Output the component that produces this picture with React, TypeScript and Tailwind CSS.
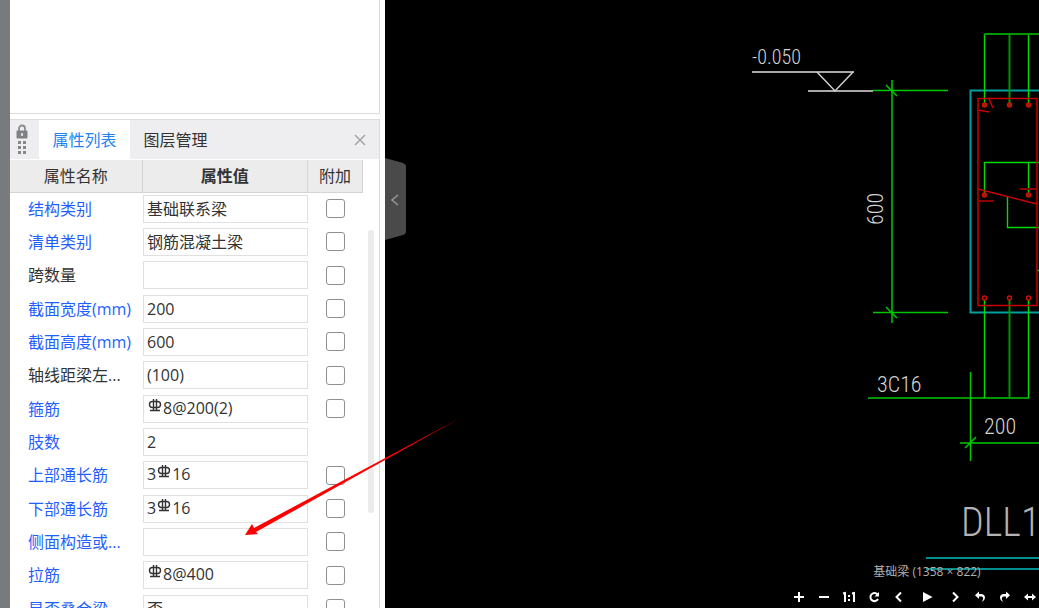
import React from "react";
import clsx from "clsx";

type Property = {
  name: string;
  value: string;
  linked?: boolean;
  // amount in front of the rebar symbol, "" when the symbol comes first
  rebar?: string;
  extra?: boolean;
};

const properties: Property[] = [
  { name: "结构类别", value: "基础联系梁", linked: true, extra: true },
  { name: "清单类别", value: "钢筋混凝土梁", linked: true, extra: true },
  { name: "跨数量", value: "", extra: true },
  { name: "截面宽度(mm)", value: "200", linked: true, extra: true },
  { name: "截面高度(mm)", value: "600", linked: true, extra: true },
  { name: "轴线距梁左...", value: "(100)", extra: true },
  { name: "箍筋", value: "8@200(2)", linked: true, rebar: "", extra: true },
  { name: "肢数", value: "2", linked: true },
  { name: "上部通长筋", value: "16", linked: true, rebar: "3", extra: true },
  { name: "下部通长筋", value: "16", linked: true, rebar: "3", extra: true },
  { name: "侧面构造或...", value: "", linked: true, extra: true },
  { name: "拉筋", value: "8@400", linked: true, rebar: "", extra: true },
  { name: "是否叠合梁", value: "否", linked: true, extra: true },
];

const RebarIcon = () => (
  <svg
    width="16"
    height="14"
    viewBox="-1 0 16 14"
    fill="none"
    stroke="#333"
    strokeWidth="1.4"
    className="mb-1 shrink-0"
  >
    <rect x="1.5" y="2.5" width="11" height="6" rx="3" />
    <path d="M5.5 0V11M8.5 0V11M2 11.5H12" />
  </svg>
);

const LockIcon = () => (
  <svg width="12" height="32" viewBox="0 0 12 32" aria-hidden="true">
    <path d="M3 7V4.5a3 3 0 0 1 6 0V7" fill="none" stroke="#8b8c8e" strokeWidth="1.8" />
    <rect x="0.5" y="6.5" width="11" height="8" rx="1" fill="#808285" />
    <rect x="5" y="9" width="2" height="3" fill="#d8d8da" />
    <g fill="#85878a">
      <rect x="2" y="17" width="3" height="3" />
      <rect x="7" y="17" width="3" height="3" />
      <rect x="2" y="22" width="3" height="3" />
      <rect x="7" y="22" width="3" height="3" />
      <rect x="2" y="27" width="3" height="3" />
      <rect x="7" y="27" width="3" height="3" />
    </g>
  </svg>
);

const PropertyRow = ({ name, value, linked, rebar, extra }: Property) => (
  <tr className="h-[33px] nth-[3n]:h-[34px]">
    <th
      scope="row"
      className={clsx(
        "whitespace-nowrap p-0 pl-[18px] text-left font-normal",
        linked ? "text-[#1f5fff]" : "text-[#333]"
      )}
    >
      {name}
    </th>
    <td className="p-0">
      <div
        className={clsx(
          "ml-px flex h-7 items-center border border-[#e0e0e0] pl-[3px]",
          rebar !== undefined && "pb-0.5"
        )}
      >
        {rebar !== undefined && (
          <>
            {rebar}
            <RebarIcon />
          </>
        )}
        <input
          type="text"
          aria-label={name}
          defaultValue={value}
          className="w-full min-w-0 bg-transparent outline-none"
        />
      </div>
    </td>
    <td className="p-0">
      {extra && (
        <input
          type="checkbox"
          aria-label={`${name} 附加`}
          className="mx-auto block size-[19px] appearance-none rounded-[3px] border border-[#8f8f8f] bg-white checked:bg-[#1f5fff]"
        />
      )}
    </td>
  </tr>
);

const PropertyPanel = () => (
  <section className="flex min-h-0 flex-1 flex-col border-r border-t border-[#dcdcde]">
    <div className="flex h-[39px] shrink-0 items-stretch bg-[#eeeef0]">
      <span className="flex w-[29px] items-center pl-1.5">
        <LockIcon />
      </span>
      <button className="w-[91px] bg-white text-[#1f82f0]">属性列表</button>
      <button className="w-[91px]">图层管理</button>
      <button aria-label="关闭" className="ml-auto px-[13px]">
        <svg width="12" height="12" viewBox="0 0 12 12" stroke="#a5a5a7" strokeWidth="1.5">
          <path d="M1 1L11 11M11 1L1 11" />
        </svg>
      </button>
    </div>

    <div className="mt-px flex min-h-0 flex-1 overflow-hidden">
      <table className="w-full flex-1 table-fixed border-collapse self-start">
        <colgroup>
          <col className="w-[132px]" />
          <col />
          <col className="w-[55px]" />
        </colgroup>
        <thead>
          <tr className="h-8 bg-[#ececec]">
            <th className="border-b border-r border-[#d4d4d4] p-0 font-normal">属性名称</th>
            <th className="border-b border-r border-[#d4d4d4] p-0 font-bold">属性值</th>
            <th className="border-b border-r border-[#d4d4d4] p-0 font-normal">附加</th>
          </tr>
        </thead>
        <tbody>
          {properties.map((property) => (
            <PropertyRow key={property.name} {...property} />
          ))}
        </tbody>
      </table>
      <div className="w-4 shrink-0 pl-[5px] pt-[70px]">
        <div className="h-[283px] w-[6px] rounded-full bg-[#ebebeb]" />
      </div>
    </div>
  </section>
);

const Drawing = () => (
  <svg
    viewBox="385 0 654 608"
    preserveAspectRatio="xMinYMin meet"
    className="block h-full w-full"
    fill="none"
  >
    {/* level mark */}
    <path d="M752 72H854M808 91H873" stroke="#a8a8a8" strokeWidth="2" />
    <path d="M817 72L835 91L853 72" stroke="#d0d0d0" strokeWidth="1.5" />

    {/* beam outline */}
    <path d="M1039 90.5H970.5V312.5H1039" stroke="#00a0a0" strokeWidth="2" />

    {/* leaders and dimension lines */}
    <g stroke="#00c800" strokeWidth="1.5">
      <path d="M873 90.5H948M873 312.5H948M892 80V323" />
      <path d="M886 85L897 96M886 307L897 318" />
      <path d="M868 398H1029M970.5 372V461M960 443H1039M965 448L976 437" />
    </g>
    <g stroke="#00dc00" strokeWidth="1.4">
      <path d="M984.5 105V34M1028.5 34V105M1039 162.5H984.5V195M1028.5 162.5V195" />
      <path d="M1007.5 197V227.5H1039M984.5 300V398M1028.5 300V398M1037 270.5H1039" />
    </g>
    <path d="M984 34H1039M1009.5 34V105M1009.5 300V398" stroke="#009600" strokeWidth="2" />

    {/* stirrup */}
    <g stroke="#c80000" strokeWidth="1.5">
      <rect x="978" y="98.5" width="59" height="207" />
      <path d="M989 99L993 108M978 110L989 112M978 189L1037 204" />
      <path d="M1020 189H1037M978 201H994" stroke="#8c0000" strokeWidth="2" />
    </g>
    <g stroke="#d01000" strokeWidth="1.5">
      <circle cx="984.5" cy="105" r="2" fill="#803000" />
      <circle cx="1009.5" cy="105" r="2" fill="#803000" />
      <circle cx="1028.5" cy="105" r="2" fill="#803000" />
      <circle cx="984.5" cy="195" r="2" fill="#803000" />
      <circle cx="1028.5" cy="195" r="2" fill="#803000" />
      <circle cx="984.5" cy="298" r="2" />
      <circle cx="1009.5" cy="298" r="2" />
      <circle cx="1028.5" cy="298" r="2" />
    </g>

    <path d="M926 558H1039M926 569H1039" stroke="#008f8f" strokeWidth="2" />

    <g fill="#d4d4d4" className="font-['Roboto_Condensed','Roboto',sans-serif] font-light">
      <text x="752" y="64" fontSize="20">-0.050</text>
      <text transform="translate(883 225) rotate(-90)" fontSize="22">600</text>
      <text x="877" y="392" fontSize="22">3C16</text>
      <text x="984" y="434" fontSize="22">200</text>
      <text x="961" y="536" fontSize="40" fill="#b4b4b4">DLL1</text>
    </g>
  </svg>
);

const toolButtons = [
  { label: "放大", width: "w-6", icon: <path d="M8 3V13M3 8H13" /> },
  { label: "缩小", width: "w-6", icon: <path d="M3 8H13" /> },
  {
    label: "原始大小",
    width: "w-6",
    icon: <path d="M2 4.5L4 4V13M11 4.5L13 4V13M8 6V8M8 10V12" />,
  },
  {
    label: "重置",
    width: "w-6",
    icon: (
      <>
        <path d="M11.5 5.5A4 4 0 1 0 12 10" />
        <path d="M13 3V7.5H8.5Z" fill="white" stroke="none" />
      </>
    ),
  },
  { label: "上一张", width: "w-6", icon: <path d="M10 3.5L5.5 8L10 12.5" /> },
  { label: "播放", width: "w-[30px]", icon: <path d="M4 3V13L13.5 8Z" fill="white" stroke="none" /> },
  { label: "下一张", width: "w-6", icon: <path d="M6 3.5L10.5 8L6 12.5" /> },
  {
    label: "向左旋转",
    width: "w-6",
    icon: (
      <>
        <path d="M7 2.5V10L3 6.2Z" fill="white" stroke="none" />
        <path d="M6 5H9C14 5 14.5 11 9.5 13C12 10 11.5 7.5 9 7.5H6Z" fill="white" stroke="none" />
      </>
    ),
  },
  {
    label: "向右旋转",
    width: "w-6",
    icon: (
      <>
        <path d="M9 2.5V10L13 6.2Z" fill="white" stroke="none" />
        <path d="M10 5H7C2 5 1.5 11 6.5 13C4 10 4.5 7.5 7 7.5H10Z" fill="white" stroke="none" />
      </>
    ),
  },
  {
    label: "水平翻转",
    width: "w-6",
    icon: (
      <>
        <path d="M4 8H12" />
        <path d="M6 4.5V11.5L2 8ZM10 4.5V11.5L14 8Z" fill="white" stroke="none" />
      </>
    ),
  },
];

const Viewer = () => (
  <main className="relative min-w-0 flex-1 overflow-hidden bg-black">
    <Drawing />

    <button aria-label="收起" className="absolute left-0 top-[158px]">
      <svg width="22" height="82" viewBox="0 0 22 82" fill="none">
        <path d="M0 0L18 5Q21 6 21 9V73Q21 76 18 77L0 82Z" fill="#4a4a4a" />
        <path d="M13 37L7 42L13 47" stroke="#999" strokeWidth="1.5" />
      </svg>
    </button>

    <div className="absolute bottom-0 left-[402px] w-[280px]">
      <p className="pb-1.5 text-center text-xs text-[#b0b0b0]">基础梁 (1358 × 822)</p>
      <div className="flex gap-px">
        {toolButtons.map(({ label, width, icon }) => (
          <button
            key={label}
            aria-label={label}
            className={clsx("flex h-[22px] shrink-0 items-center justify-center", width)}
          >
            <svg width="16" height="16" viewBox="0 0 16 16" fill="none" stroke="white" strokeWidth="2">
              {icon}
            </svg>
          </button>
        ))}
      </div>
    </div>
  </main>
);

const App = () => {
  return (
    <div className="relative flex h-screen overflow-hidden bg-white font-['Open_Sans','Noto_Sans_CJK_SC',sans-serif] text-base/6 text-[#333]">
      <aside className="flex w-[385px] shrink-0 flex-col border-l-[10px] border-[#777b7e] pr-[5px]">
        <div className="mb-[5px] h-[114px] shrink-0 border-b border-r border-[#dcdcde]" />
        <PropertyPanel />
      </aside>
      <Viewer />

      {/* pointer to the side bars field */}
      <svg
        width="220"
        height="122"
        viewBox="244 416 220 122"
        className="pointer-events-none absolute left-[244px] top-[416px]"
      >
        <defs>
          <linearGradient id="tail" x1="0" x2="1" y1="0" y2="0">
            <stop offset="0.8" stopColor="#ff0000" />
            <stop offset="1" stopColor="#ff0000" stopOpacity="0.7" />
          </linearGradient>
        </defs>
        <path d="M245 535L252 524L254 528L463 416.5L256 532L258 534Z" fill="url(#tail)" />
      </svg>
    </div>
  );
};

export default App;
